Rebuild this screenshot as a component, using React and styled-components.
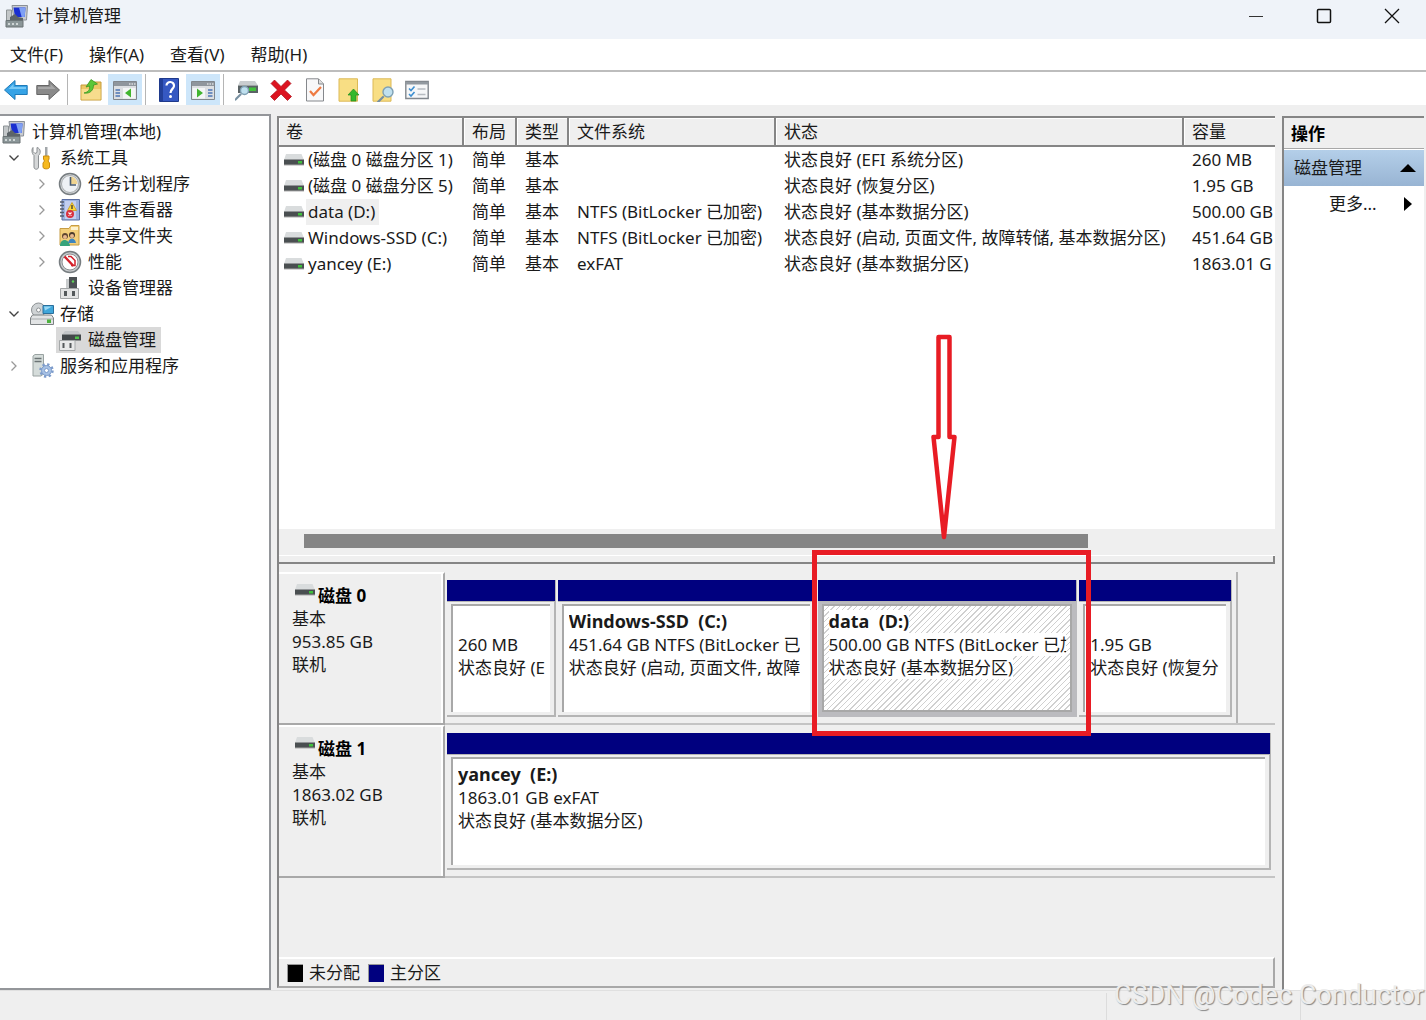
import React from 'react'
import styled, { createGlobalStyle, css } from 'styled-components'

const volumes = [
  { name: '(磁盘 0 磁盘分区 1)', layout: '简单', type: '基本', fs: '', status: '状态良好 (EFI 系统分区)', size: '260 MB' },
  { name: '(磁盘 0 磁盘分区 5)', layout: '简单', type: '基本', fs: '', status: '状态良好 (恢复分区)', size: '1.95 GB' },
  { name: 'data (D:)', layout: '简单', type: '基本', fs: 'NTFS (BitLocker 已加密)', status: '状态良好 (基本数据分区)', size: '500.00 GB', selected: true },
  { name: 'Windows-SSD (C:)', layout: '简单', type: '基本', fs: 'NTFS (BitLocker 已加密)', status: '状态良好 (启动, 页面文件, 故障转储, 基本数据分区)', size: '451.64 GB' },
  { name: 'yancey (E:)', layout: '简单', type: '基本', fs: 'exFAT', status: '状态良好 (基本数据分区)', size: '1863.01 G' },
]

const disks = [
  {
    name: '磁盘 0',
    size: '953.85 GB',
    columns: '109fr 258fr 260fr 153fr',
    inset: 37,
    partitions: [
      { title: '', info: '260 MB', status: '状态良好 (E' },
      { title: 'Windows-SSD  (C:)', info: '451.64 GB NTFS (BitLocker 已', status: '状态良好 (启动, 页面文件, 故障' },
      { title: 'data  (D:)', info: '500.00 GB NTFS (BitLocker 已加', status: '状态良好 (基本数据分区)', selected: true },
      { title: '', info: '1.95 GB', status: '状态良好 (恢复分' },
    ],
  },
  {
    name: '磁盘 1',
    size: '1863.02 GB',
    columns: '1fr',
    inset: 0,
    partitions: [
      { title: 'yancey  (E:)', info: '1863.01 GB exFAT', status: '状态良好 (基本数据分区)' },
    ],
  },
]

const tree = [
  { label: '计算机管理(本地)', level: 0, icon: ComputerIcon },
  { label: '系统工具', level: 1, icon: ToolsIcon, state: 'open' },
  { label: '任务计划程序', level: 2, icon: ClockIcon, state: 'closed' },
  { label: '事件查看器', level: 2, icon: EventIcon, state: 'closed' },
  { label: '共享文件夹', level: 2, icon: SharedIcon, state: 'closed' },
  { label: '性能', level: 2, icon: GaugeIcon, state: 'closed' },
  { label: '设备管理器', level: 2, icon: DeviceIcon },
  { label: '存储', level: 1, icon: StorageIcon, state: 'open' },
  { label: '磁盘管理', level: 2, icon: DiskManageIcon, selected: true },
  { label: '服务和应用程序', level: 1, icon: ServicesIcon, state: 'closed' },
]

export default function App() {
  return (
    <Window>
      <GlobalStyle />
      <TitleBar>
        <ComputerIcon />
        <Title>计算机管理</Title>
        <WindowButtons>
          <WindowButton aria-label="最小化">
            <svg width="16" height="16"><path d="M1 8.5h14" stroke="#333" fill="none" /></svg>
          </WindowButton>
          <WindowButton aria-label="最大化">
            <svg width="16" height="16"><rect x="1.5" y="1.5" width="13" height="13" rx="1" stroke="#111" strokeWidth="1.5" fill="none" /></svg>
          </WindowButton>
          <WindowButton aria-label="关闭">
            <svg width="16" height="16"><path d="M1 1l14 14M15 1L1 15" stroke="#111" strokeWidth="1.3" fill="none" /></svg>
          </WindowButton>
        </WindowButtons>
      </TitleBar>
      <MenuBar>
        <MenuItem>文件(F)</MenuItem>
        <MenuItem>操作(A)</MenuItem>
        <MenuItem>查看(V)</MenuItem>
        <MenuItem>帮助(H)</MenuItem>
      </MenuBar>
      <Toolbar>
        <ToolButton $narrow aria-label="后退"><ArrowIcon /></ToolButton>
        <ToolButton $narrow aria-label="前进"><ArrowIcon forward /></ToolButton>
        <Separator />
        <ToolButton aria-label="向上"><FolderUpIcon /></ToolButton>
        <ToolButton $active aria-label="显示控制台树"><PaneIcon /></ToolButton>
        <Separator />
        <ToolButton aria-label="帮助"><HelpIcon /></ToolButton>
        <ToolButton $active aria-label="显示操作窗格"><PaneIcon right /></ToolButton>
        <Separator />
        <ToolButton aria-label="重新扫描"><DiskSearchIcon /></ToolButton>
        <ToolButton aria-label="删除"><DeleteIcon /></ToolButton>
        <ToolButton aria-label="属性"><CheckDocIcon /></ToolButton>
        <ToolButton aria-label="打开"><NoteUpIcon /></ToolButton>
        <ToolButton aria-label="浏览"><NoteSearchIcon /></ToolButton>
        <ToolButton aria-label="设置"><ListIcon /></ToolButton>
      </Toolbar>

      <Main>
        <Tree>
          {tree.map(({ label, level, icon: Icon, state, selected }) => (
            <TreeRow key={label} $level={level}>
              {level > 0 && <Chevron state={state} />}
              <TreeNode $selected={selected}>
                <Icon />
                {label}
              </TreeNode>
            </TreeRow>
          ))}
        </Tree>

        <Center>
          <VolumePane>
            <VolumeTable>
              <colgroup>
                <col width="185" />
                <col width="53" />
                <col width="52" />
                <col width="207" />
                <col width="408" />
                <col />
              </colgroup>
              <thead>
                <tr>
                  <HeadCell>卷</HeadCell>
                  <HeadCell>布局</HeadCell>
                  <HeadCell>类型</HeadCell>
                  <HeadCell>文件系统</HeadCell>
                  <HeadCell>状态</HeadCell>
                  <HeadCell>容量</HeadCell>
                </tr>
              </thead>
              <tbody>
                {volumes.map((v) => (
                  <tr key={v.name}>
                    <NameCell>
                      <VolumeName>
                        <DriveIcon />
                        <VolumeLabel $selected={v.selected}>{v.name}</VolumeLabel>
                      </VolumeName>
                    </NameCell>
                    <Cell>{v.layout}</Cell>
                    <Cell>{v.type}</Cell>
                    <Cell>{v.fs}</Cell>
                    <Cell>{v.status}</Cell>
                    <Cell>{v.size}</Cell>
                  </tr>
                ))}
              </tbody>
            </VolumeTable>
          </VolumePane>
          <ScrollTrack><ScrollThumb /></ScrollTrack>
          <SplitBar />

          <DiskList>
            {disks.map((disk) => (
              <DiskRow key={disk.name}>
                <DiskInfo>
                  <DiskName><DriveIcon />{disk.name}</DiskName>
                  <div>基本</div>
                  <div>{disk.size}</div>
                  <div>联机</div>
                </DiskInfo>
                <DiskMap>
                  <Partitions $columns={disk.columns} $inset={disk.inset}>
                    {disk.partitions.map((p) => (
                      <Partition key={p.info}>
                        <PartitionBar />
                        <PartitionBody $selected={p.selected}>
                          <PartitionBox $selected={p.selected}>
                            <PartitionLine $bold>{p.title}</PartitionLine>
                            <PartitionLine>{p.info}</PartitionLine>
                            <PartitionLine>{p.status}</PartitionLine>
                          </PartitionBox>
                        </PartitionBody>
                        {p.selected && (
                          <Callout>
                            <CalloutArrow viewBox="0 0 26 208">
                              <path d="M7.5 3h11V103h5L13 203 2.500 103h5z" fill="none" stroke="#e81c24" strokeWidth="4.500" strokeLinejoin="round" />
                            </CalloutArrow>
                          </Callout>
                        )}
                      </Partition>
                    ))}
                  </Partitions>
                </DiskMap>
              </DiskRow>
            ))}
          </DiskList>
          <Legend>
            <Swatch $color="#000" />未分配
            <Swatch $color="#00007f" />主分区
          </Legend>
        </Center>

        <Actions>
          <ActionsTitle>操作</ActionsTitle>
          <ActionsGroup>
            磁盘管理
            <svg width="16" height="8"><path d="M0 8L8 0l8 8z" /></svg>
          </ActionsGroup>
          <ActionsMore>
            更多...
            <svg width="8" height="14"><path d="M0 0l8 7-8 7z" /></svg>
          </ActionsMore>
        </Actions>
      </Main>

      <StatusBar>
        <StatusCell $width={194} />
        <StatusCell $width={126} />
      </StatusBar>
      <Watermark>CSDN @Codec Conductor</Watermark>
    </Window>
  )
}

/* ---------- icons ---------- */

function Chevron({ state }) {
  return (
    <ChevronSlot>
      {state === 'open' && (
        <svg width="12" height="8"><path d="M1.500 1.500L6 6l4.500-4.500" fill="none" stroke="#444" strokeWidth="1.400" /></svg>
      )}
      {state === 'closed' && (
        <svg width="8" height="12"><path d="M1.500 1.500L6 6l-4.500 4.500" fill="none" stroke="#999" strokeWidth="1.300" /></svg>
      )}
    </ChevronSlot>
  )
}

function ComputerIcon() {
  return (
    <svg width="24" height="24" viewBox="0 0 24 24">
      <path d="M7 1.500h15.500L21.500 16H9z" fill="#c9ccd0" stroke="#8a8f96" />
      <path d="M8.500 3.500h12l-.8 9.500H10z" fill="#1a2fd0" />
      <path d="M14 3.500h6.500l-.8 9.500h-3z" fill="#7fa0f4" />
      <path d="M1.500 6h5v11h-5z" fill="#c3c7c9" stroke="#8d9396" />
      <path d="M5 13l5-3 3 3 5 1v2H5z" fill="#5c6468" />
      <path d="M1 16.500h17V23H1z" fill="#8b9698" stroke="#6a7375" />
      <path d="M3 19h2v2H3zM7 19h2v2H7zM11 19h2v2h-2z" fill="#cfd6d6" />
    </svg>
  )
}

function ToolsIcon() {
  return (
    <svg width="24" height="24" viewBox="0 0 24 24">
      <path d="M3 1.500v4l2 2 2-1 0-5c4 1 4 6 1.500 8V21c0 3-4.500 3-4.500 0V9.500C1.500 7.500 1.500 3 3 1.500z" fill="#d5d7d8" stroke="#8b8f92" />
      <path d="M15 1h2.500v9H15z" fill="#a2a7aa" />
      <path d="M13.500 10h5.500v3l-1 2 1.500 2v4c0 2.500-6.500 2.500-6.500 0v-4l1.500-2-1-2z" fill="#f6b91f" stroke="#c98c10" />
    </svg>
  )
}

function ClockIcon() {
  return (
    <svg width="24" height="24" viewBox="0 0 24 24">
      <circle cx="12" cy="12" r="10.500" fill="#d5d8da" stroke="#777d80" strokeWidth="1.500" />
      <circle cx="12" cy="12" r="8.500" fill="#eef1f5" stroke="#a9adaf" />
      <path d="M12 12V4.500A7.500 7.500 0 0119.500 12z" fill="#f0d490" />
      <path d="M12.500 5v8H18" fill="none" stroke="#4b5c70" strokeWidth="1.600" />
    </svg>
  )
}

function EventIcon() {
  return (
    <svg width="24" height="24" viewBox="0 0 24 24">
      <path d="M4 1.500h17.500v20.500H4z" fill="#9cb2e0" stroke="#5a6ea3" />
      <path d="M7 3h11v18H7z" fill="#c3cff0" />
      <path d="M2 4h4M2 7.500h4M2 11h4M2 14.500h4M2 18h4" stroke="#555d6d" strokeWidth="1.500" />
      <path d="M14 4.500l4.500 8h-9z" fill="#ffd93b" stroke="#c7981a" strokeWidth=".8" />
      <path d="M14 7v4" stroke="#333" strokeWidth="1.300" />
      <circle cx="12" cy="16" r="4" fill="#d9303f" />
      <path d="M10.500 14.500l3 3m0-3l-3 3" stroke="#fff" strokeWidth="1.100" />
    </svg>
  )
}

function SharedIcon() {
  return (
    <svg width="24" height="24" viewBox="0 0 24 24">
      <path d="M2 4.500h9l2-3h8V21H2z" fill="#f3cf7a" stroke="#c79d45" />
      <path d="M13 3h7v3h-7z" fill="#fdf2cf" />
      <circle cx="7" cy="12" r="3" fill="#5f4630" />
      <circle cx="7" cy="13" r="2" fill="#e9b98e" />
      <path d="M2 22c0-8 9-8 10 0z" fill="#36a37b" />
      <circle cx="14" cy="11" r="3" fill="#4a3a2d" />
      <circle cx="14" cy="12" r="2" fill="#e9b98e" />
      <path d="M10 19c1-6 7-6 8 0z" fill="#3f86bf" />
    </svg>
  )
}

function GaugeIcon() {
  return (
    <svg width="24" height="24" viewBox="0 0 24 24">
      <circle cx="12" cy="12" r="10.500" fill="#c7cacc" stroke="#777d80" strokeWidth="1.500" />
      <circle cx="12" cy="12" r="8" fill="#fff" stroke="#8c9092" />
      <path d="M6.500 6.500l9 9.500" stroke="#d3202a" strokeWidth="2.400" />
      <path d="M10 6.500h3l4 4v5h-4" fill="none" stroke="#d3202a" strokeWidth="1.500" />
    </svg>
  )
}

function DeviceIcon() {
  return (
    <svg width="24" height="24" viewBox="0 0 24 24">
      <path d="M11 1h8v12h-8z" fill="#4c5154" />
      <path d="M8 3h3v9H8z" fill="#c9cccd" />
      <circle cx="15" cy="5.500" r="1.200" fill="#5fd35a" />
      <path d="M2.500 12.500h18v10h-18z" fill="#e3e4e4" stroke="#a2a5a6" />
      <path d="M6 15h3v5H6zM14 15h3v5h-3z" fill="#54595b" />
    </svg>
  )
}

function StorageIcon() {
  return (
    <svg width="24" height="24" viewBox="0 0 24 24">
      <circle cx="8.500" cy="8" r="7" fill="#cfd3d5" stroke="#8d9295" />
      <circle cx="8.500" cy="8" r="2" fill="#fff" stroke="#8d9295" />
      <path d="M13 3.500h10.500v8H13z" fill="#3fa6da" stroke="#2b6f9c" />
      <path d="M14 4.500h8l-7 4z" fill="#9ad8f4" />
      <path d="M2.500 13h19l2 3v6.500h-23V16z" fill="#e2e4e5" stroke="#7d8284" />
      <path d="M1 17h22" stroke="#a8acae" />
      <path d="M17 17.500h4v3.500h-4z" fill="#4db23e" />
    </svg>
  )
}

function DiskManageIcon() {
  return (
    <svg width="24" height="24" viewBox="0 0 24 24">
      <path d="M7 3h13l3 3.500H4z" fill="#c3c6c8" />
      <path d="M4 6.500h19v6H4z" fill="#43484a" />
      <path d="M17 8.500h4v2.500h-4z" fill="#4fc24a" />
      <path d="M1.500 12.500h15.500v10H1.500z" fill="#e8e9e9" stroke="#a5a8a9" />
      <path d="M4.500 15h2v5h-2zM11.500 15h2v5h-2z" fill="#54595b" />
    </svg>
  )
}

function ServicesIcon() {
  return (
    <svg width="24" height="24" viewBox="0 0 24 24">
      <path d="M3 2l2-1.500h8.500V20L11 22H3z" fill="#d5dcda" stroke="#99a2a1" />
      <path d="M4.500 4.500h7M4.500 7.500h7" stroke="#6c7475" strokeWidth="1.300" />
      <circle cx="16.500" cy="16.500" r="6" fill="none" stroke="#7d9ccb" strokeWidth="2.500" strokeDasharray="2.300 2.400" />
      <circle cx="16.500" cy="16.500" r="5" fill="#a7c1e4" stroke="#7d9ccb" />
      <circle cx="16.500" cy="16.500" r="2" fill="#fff" stroke="#7d9ccb" />
    </svg>
  )
}

function DriveIcon() {
  return (
    <svg width="20" height="12" viewBox="0 0 20 12">
      <path d="M2 0h15.500L20 6H0z" fill="#d9dcdd" />
      <path d="M0 5.500h20V11H0z" fill="#4a4f51" />
      <path d="M0 10.500h20v1H0z" fill="#aaa" />
      <path d="M14 7h4v2.500h-4z" fill="#3fc03c" />
    </svg>
  )
}

function ArrowIcon({ forward }) {
  return (
    <svg width="24" height="22" viewBox="0 0 24 22">
      <path
        d={forward ? 'M23.500 11L13 1.500v5H.8v9H13v5z' : 'M.5 11L11 1.500v5h12.200v9H11v5z'}
        fill={forward ? '#8a8a8a' : '#36a3e6'}
        stroke={forward ? '#666' : '#1f7ab8'}
      />
      <path d={forward ? 'M2 8h12.500V5l5 5H2z' : 'M22 8H9.500V5l-5 5H22z'} fill={forward ? '#a8a8a8' : '#77c9f6'} />
    </svg>
  )
}

function FolderUpIcon() {
  return (
    <svg width="24" height="24" viewBox="0 0 24 24">
      <path d="M2 7h7l2-3h11v18H2z" fill="#edc765" stroke="#c69c3b" />
      <path d="M2.500 11h19V21.500h-19z" fill="#f7dc8d" />
      <path d="M5 15c5-1 6-4 5.500-7L7 9l5-7.500L18.500 6l-4 1c0 5-3 9-9.500 8z" fill="#5cc738" stroke="#3b9722" strokeWidth=".8" />
    </svg>
  )
}

function PaneIcon({ right }) {
  const listX = right ? 18 : 3.5
  const viewX = right ? 2.5 : 11
  return (
    <svg width="26" height="24" viewBox="0 0 26 24">
      <path d="M1.500 3.500h23v18h-23z" fill="#dcdfe2" stroke="#81878d" />
      <path d="M2 4h22v4H2z" fill="#8f969d" />
      <path d="M17 6h1.500M19.500 6H21M22 6h1.500" stroke="#fff" />
      <path d={`M${viewX} 10h12.500v10.500H${viewX}z`} fill="#f4f6f7" />
      <path d={`M${listX} 12h4.500M${listX} 15h4.500M${listX} 18h4.500`} stroke="#4b76b5" strokeWidth="1.400" />
      <path d={right ? 'M7 10.500l6 4.500-6 4.500z' : 'M19 10.500L13 15l6 4.500z'} fill="#42b52f" />
    </svg>
  )
}

function HelpIcon() {
  return (
    <svg width="20" height="24" viewBox="0 0 20 24">
      <path d="M.5.500h19v23H.5z" fill="#3558c2" stroke="#1f3a8c" />
      <path d="M1 1h3v22H1z" fill="#223f99" />
      <path d="M7.500 7.500c0-5 8-4.500 7.500.5-.3 3-3.500 3-3.500 7" fill="none" stroke="#fff" strokeWidth="2.200" />
      <circle cx="11.500" cy="18.500" r="1.500" fill="#fff" />
    </svg>
  )
}

function Magnifier({ x, y, r }) {
  return (
    <g>
      <path d={`M${x - r} ${y + r}l-5 5`} stroke="#778fa0" strokeWidth="2.200" strokeLinecap="round" />
      <circle cx={x} cy={y} r={r} fill="#bfe0ef" stroke="#7fa0b3" strokeWidth="1.400" />
    </g>
  )
}

function DiskSearchIcon() {
  return (
    <svg width="24" height="24" viewBox="0 0 24 24">
      <path d="M5 3h15l3 4.500H3z" fill="#c9cdcf" />
      <path d="M3 7.500h20V15H3z" fill="#5a6265" />
      <path d="M14 9.500h7v3.500h-7z" fill="#42c03c" />
      <Magnifier x={9.5} y={12.5} r={4} />
    </svg>
  )
}

function DeleteIcon() {
  return (
    <svg width="24" height="24" viewBox="0 0 24 24">
      <path d="M5.500 2L12 8.500 18.500 2 22 5.500 15.500 12l7 6.500-4 4L12 16l-6.500 6.500-4-4 7-6.500L2 5.500z" fill="#dc1420" stroke="#a90e18" strokeWidth=".7" />
    </svg>
  )
}

function CheckDocIcon() {
  return (
    <svg width="20" height="24" viewBox="0 0 20 24">
      <path d="M1.500.800h12l5 5V23h-17z" fill="#f8f8f9" stroke="#85888c" />
      <path d="M13.500 1v5h5" fill="#ddd" stroke="#85888c" />
      <path d="M5 13l3.500 4L16 9" fill="none" stroke="#ee7a42" strokeWidth="2.200" />
    </svg>
  )
}

function NoteUpIcon() {
  return (
    <svg width="22" height="24" viewBox="0 0 22 24">
      <path d="M1 .8h18.500v22.400H1z" fill="#f8de84" stroke="#dcb956" />
      <path d="M15.500 11l5.500 6h-3v6h-5v-6h-3z" fill="#35b82c" stroke="#238a1d" strokeWidth=".7" />
    </svg>
  )
}

function NoteSearchIcon() {
  return (
    <svg width="24" height="24" viewBox="0 0 24 24">
      <path d="M2 .8h18v22.400H2z" fill="#f8de84" stroke="#dcb956" />
      <Magnifier x={17} y={14} r={5} />
    </svg>
  )
}

function ListIcon() {
  return (
    <svg width="24" height="20" viewBox="0 0 24 20">
      <path d="M.8 1.500h22.400v17H.8z" fill="#f6f7f8" stroke="#82888e" strokeWidth="1.400" />
      <path d="M1 2h22v2.500H1z" fill="#9299a0" />
      <path d="M4 8.500l2 2 3.500-4M4 14l2 2 3.500-4" fill="none" stroke="#3e8fd0" strokeWidth="1.600" />
      <path d="M12.500 9h8M12.500 14.500h8" stroke="#b7bcc1" strokeWidth="1.300" />
    </svg>
  )
}

/* ---------- styles ---------- */

const GlobalStyle = createGlobalStyle`
  * {
    box-sizing: border-box;
  }

  body {
    margin: 0;
    background: #efefef;
    color: #1a1a1a;
    font-family: "Noto Sans", "Noto Sans CJK SC", sans-serif;
    font-size: 17px;
    line-height: 26px;
  }

  svg {
    flex: none;
    display: block;
  }

  button {
    border: none;
    padding: 0;
    background: none;
    color: inherit;
    font: inherit;
  }
`

const Window = styled.div`
  position: relative;
  min-height: 100vh;
  display: flex;
  flex-direction: column;
`

const TitleBar = styled.header`
  display: flex;
  align-items: center;
  height: 39px;
  padding: 0 0 7px 5px;
  background: #eff3f9;
`

const Title = styled.div`
  margin-left: 7px;
`

const WindowButtons = styled.div`
  display: flex;
  margin-left: auto;
`

const WindowButton = styled.button`
  width: 68px;
  height: 32px;
  display: flex;
  align-items: center;
  justify-content: center;
`

const MenuBar = styled.nav`
  display: flex;
  gap: 26px;
  height: 33px;
  padding: 3px 10px;
  background: #fff;
  border-bottom: 2px solid #bdbdbd;
`

const MenuItem = styled.button``

const Toolbar = styled.div`
  display: flex;
  height: 33px;
  padding-top: 2px;
  background: #fff;
`

const ToolButton = styled.button`
  width: ${(props) => (props.$narrow ? '32px' : '34px')};
  display: flex;
  align-items: center;
  justify-content: center;
  background: ${(props) => (props.$active ? '#cde6fa' : 'none')};
`

const Separator = styled.div`
  width: 1px;
  margin: 0 6px 0 3px;
  background: #b5b5b5;
`

const Main = styled.main`
  flex: 1;
  display: grid;
  grid-template-columns: 271px minmax(0, 1fr) 142px;
  gap: 6px;
  padding: 9px 2px 0 0;
`

const Tree = styled.aside`
  padding-top: 3px;
  background: #fff;
  border: solid #94969a;
  border-width: 2px 2px 2px 0;
`

const TreeRow = styled.div`
  display: flex;
  padding-left: ${(props) => (props.$level === 2 ? '28px' : '0')};
`

const ChevronSlot = styled.div`
  width: 28px;
  display: flex;
  align-items: center;
  justify-content: center;
`

const TreeNode = styled.div`
  display: flex;
  align-items: center;
  gap: 6px;
  height: 26px;
  padding: 0 5px 0 2px;
  white-space: nowrap;
  background: ${(props) => (props.$selected ? '#d9d9d9' : 'none')};
`

const Center = styled.section`
  display: flex;
  flex-direction: column;
  margin: 2px 1px 2px 0;
  border-left: 2px solid #858585;
  border-top: 2px solid #858585;
  border-bottom: 2px solid #a8a8a8;
`

const VolumePane = styled.div`
  height: 411px;
  overflow: hidden;
  background: #fff;
`

const VolumeTable = styled.table`
  width: 100%;
  table-layout: fixed;
  border-collapse: separate;
  border-spacing: 0;
`

const HeadCell = styled.th`
  height: 29px;
  padding: 1px 7px 0 7px;
  overflow: hidden;
  text-align: left;
  font-weight: 400;
  white-space: nowrap;
  background: #efefef;
  border: solid #858585;
  border-width: 0 2px 2px 0;
  box-shadow: inset 1px 1px #fff;

  & + & {
    padding-left: 8px;
  }

  &:last-child {
    border-right: none;
  }
`

const Cell = styled.td`
  height: 26px;
  padding: 0 0 0 8px;
  overflow: hidden;
  white-space: nowrap;
`

const NameCell = styled(Cell)`
  padding-left: 5px;
`

const VolumeName = styled.div`
  display: flex;
  align-items: center;
  gap: 2px;
`

const VolumeLabel = styled.span`
  padding: 0 4px 0 2px;
  background: ${(props) => (props.$selected ? '#efefef' : 'none')};
`

const ScrollTrack = styled.div`
  height: 27px;
  padding: 5px 187px 0 25px;
  border-bottom: 1px solid #fff;
`

const ScrollThumb = styled.div`
  height: 14px;
  background: #858585;
`

const SplitBar = styled.div`
  height: 8px;
  border-bottom: 2px solid #858585;
  border-right: 2px solid #858585;
`

const DiskList = styled.div`
  flex: 1;
  padding-top: 8px;
`

const DiskRow = styled.div`
  display: flex;
  height: 153px;
`

const DiskInfo = styled.div`
  width: 166px;
  padding: 10px 0 0 13px;
  line-height: 23px;
  border-top: 2px solid #fff;
  border-right: 2px solid #a8a8a8;
  border-bottom: 2px solid #a8a8a8;
  box-shadow: inset -2px 0 #fff;
`

const DiskName = styled.div`
  display: flex;
  gap: 3px;
  padding-left: 3px;
  font-weight: 700;
  color: #000;
`

const DiskMap = styled.div`
  flex: 1;
  min-width: 0;
  border-bottom: 2px solid #c4c4c4;
`

const Partitions = styled.div`
  display: grid;
  grid-template-columns: ${(props) => props.$columns};
  gap: 2px;
  height: 151px;
  margin-right: ${(props) => props.$inset}px;
  padding: 8px 4px 6px 2px;
  border-right: ${(props) => (props.$inset ? '2px solid #b5b5b5' : 'none')};
`

const Partition = styled.div`
  position: relative;
  min-width: 0;
  display: flex;
  flex-direction: column;
`

const PartitionBar = styled.div`
  height: 22px;
  background: #00007f;
  border-right: 1px solid #b5b5b5;
  border-bottom: 1px solid #b5b5b5;
`

const PartitionBody = styled.div`
  flex: 1;
  min-height: 0;
  padding: 2px 4px 3px 4px;
  border-right: 2px solid #b5b5b5;
  border-bottom: 2px solid #b5b5b5;

  ${(props) => props.$selected && css`
    padding: 2px 3px 3px 4px;
    background: #bbbbbf;
    border-color: #bbbbbf;
  `}
`

const PartitionBox = styled.div`
  height: 100%;
  overflow: hidden;
  padding: 4px 4px 0 5px;
  line-height: 23px;
  background: #fff;
  border-top: 2px solid #a8a8a8;
  border-left: 2px solid #a8a8a8;

  ${(props) => props.$selected && css`
    border: 2px solid #a8a8a8;
    background: repeating-linear-gradient(135deg, #fff 0 3px, #d0d0d0 3px 4px);

    ${PartitionLine} {
      background: #fff;
    }
  `}
`

const PartitionLine = styled.div`
  width: fit-content;
  max-width: 100%;
  height: 23px;
  overflow: hidden;
  white-space: pre;
  font-size: ${(props) => (props.$bold ? '18px' : '17px')};
  font-weight: ${(props) => (props.$bold ? 700 : 400)};
`

const Callout = styled.div`
  position: absolute;
  z-index: 1;
  top: -30px;
  right: -14px;
  bottom: -19px;
  left: -6px;
  border: 5px solid #e81c24;
  pointer-events: none;
`

const CalloutArrow = styled.svg`
  position: absolute;
  left: calc(50% - 20px);
  bottom: calc(100% + 13px);
  width: 26px;
  height: 208px;
`

const Legend = styled.footer`
  display: flex;
  align-items: center;
  height: 29px;
  padding-left: 8px;
  border-top: 2px solid #fff;
  border-right: 2px solid #a8a8a8;
`

const Swatch = styled.span`
  width: 16px;
  height: 18px;
  margin-right: 6px;
  background: ${(props) => props.$color};
  border-top: 1px solid #999;
  border-left: 1px solid #999;

  &:not(:first-child) {
    margin-left: 8px;
  }
`

const Actions = styled.aside`
  margin-top: 2px;
  background: #fff;
  border-left: 2px solid #858585;
  border-top: 2px solid #858585;
`

const ActionsTitle = styled.div`
  height: 31px;
  padding: 3px 7px;
  font-weight: 700;
  color: #000;
  background: #efefef;
  border-bottom: 1px solid #a8a8a8;
`

const ActionsGroup = styled.div`
  display: flex;
  align-items: center;
  justify-content: space-between;
  height: 36px;
  margin-top: 1px;
  padding: 0 8px 0 10px;
  background: linear-gradient(#b4cfe9, #98b4d3);
`

const ActionsMore = styled.div`
  display: flex;
  align-items: center;
  justify-content: space-between;
  height: 36px;
  padding: 0 12px 0 45px;
`

const StatusBar = styled.footer`
  display: flex;
  justify-content: flex-end;
  height: 30px;
  padding-top: 2px;
  border-top: 1px solid #e0e0e0;
`

const StatusCell = styled.div`
  width: ${(props) => props.$width}px;
  border-left: 1px solid #dcdcdc;
`

const Watermark = styled.div`
  position: absolute;
  right: 2px;
  bottom: 10px;
  font-family: Roboto, sans-serif;
  font-size: 27px;
  line-height: 30px;
  color: #ececec;
  text-shadow: 1px 1px 1px #888;
`
